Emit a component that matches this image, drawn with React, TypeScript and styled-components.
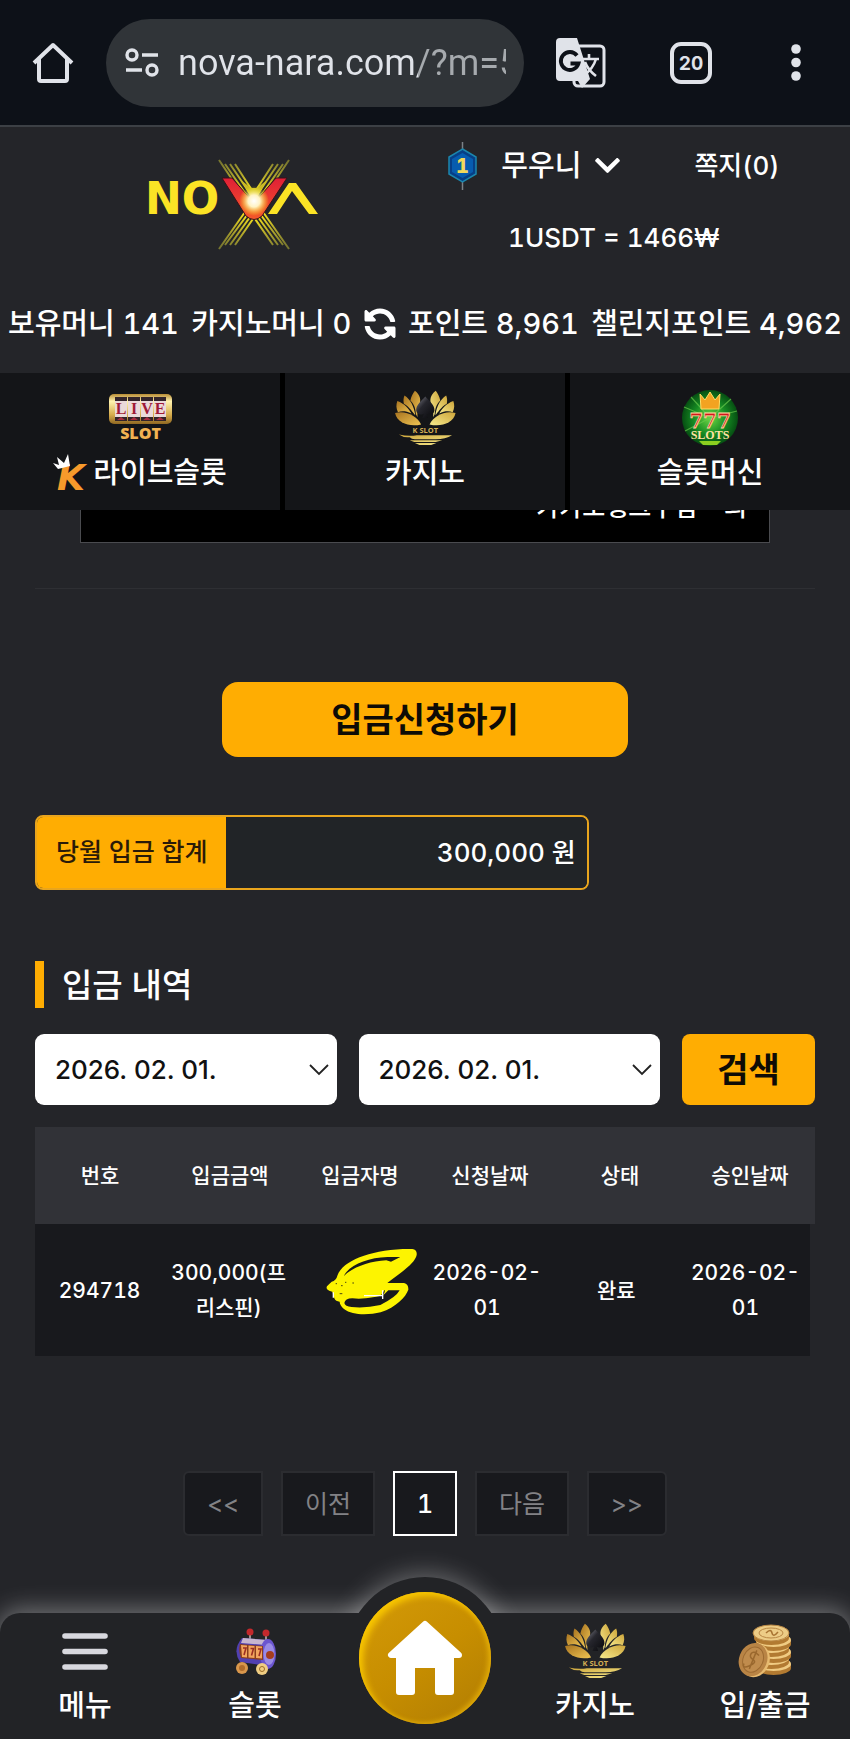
import React, { useId } from "react";
import styled, { createGlobalStyle, css } from "styled-components";
import { FaSyncAlt, FaChevronDown } from "react-icons/fa";

const amber = "#ffad02";
const panel = "#18191d";
const surface = "#242529";
const navSurface = "#222326";

const GlobalStyle = createGlobalStyle`
  *, *::before, *::after { box-sizing: border-box; }
  body {
    margin: 0;
    background: ${surface};
    color: #fff;
    font-family: Inter, "Noto Sans CJK KR", sans-serif;
    font-weight: 500;
    font-variant-numeric: tabular-nums;
  }
  button, input, select { font: inherit; color: inherit; margin: 0; }
  button { cursor: pointer; }
  a { color: inherit; text-decoration: none; }
  svg { display: block; flex: none; }
`;

const Page = styled.div`
  display: flex;
  flex-direction: column;
  min-height: 100vh;
`;

/* Browser bar */

const BrowserBar = styled.div`
  display: flex;
  align-items: center;
  height: 127px;
  padding: 0 34px 0 32px;
  background: #0d1118;
  border-bottom: 2px solid #3c4045;
  color: #e0e3e9;
`;

const BarButton = styled.button`
  display: grid;
  place-items: center;
  flex: none;
  min-width: 40px;
  padding: 0;
  border: 0;
  background: none;
`;

const AddressBar = styled.label`
  display: flex;
  align-items: center;
  gap: 18px;
  flex: 1;
  min-width: 0;
  height: 88px;
  margin: 0 32px;
  padding: 0 18px;
  border-radius: 44px;
  background: #303438;
`;

const AddressInput = styled.input`
  flex: 1;
  min-width: 0;
  padding: 0;
  border: 0;
  outline: 0;
  background: linear-gradient(to right, #e0e3e9 240px, #a6aaae 240px);
  background-clip: text;
  color: transparent;
  font-family: Roboto, sans-serif;
  font-weight: 400;
  font-size: 36px;
  line-height: 44px;
`;

const BarActions = styled.div`
  display: flex;
  align-items: center;
  gap: 64px;
`;

/* Site header */

const Header = styled.header`
  display: grid;
  grid-template-columns: 4fr 5fr;
  align-items: center;
  height: 153px;
`;

const LogoLink = styled.a`
  justify-self: end;
  margin-right: 60px;
`;

const Account = styled.div`
  display: flex;
  flex-direction: column;
  align-items: center;
  gap: 36px;
  padding-bottom: 4px;
`;

const AccountRow = styled.div`
  display: flex;
  align-items: center;
  gap: 24px;
  height: 36px;
`;

const UserButton = styled.button`
  display: flex;
  align-items: center;
  gap: 12px;
  padding: 0;
  border: 0;
  background: none;
  font-size: 29px;
  line-height: 36px;
`;

const MessageLink = styled.a`
  margin-left: 48px;
  font-size: 26px;
  line-height: 36px;
`;

const Rate = styled.p`
  margin: 0;
  font-size: 26px;
  line-height: 36px;
`;

const Balances = styled.div`
  display: flex;
  align-items: center;
  justify-content: space-between;
  height: 93px;
  padding: 0 8px 6px;
  font-size: 29px;
  line-height: 40px;
  white-space: nowrap;
`;

const RefreshButton = styled(BarButton)`
  min-width: 32px;
  color: #fff;
  svg { transform: scaleX(-1); }
`;

const GameTabs = styled.nav`
  display: grid;
  grid-template-columns: repeat(3, 1fr);
  gap: 5px;
  background: #000;
`;

const GameTab = styled.a`
  display: flex;
  flex-direction: column;
  align-items: center;
  height: 137px;
  padding-top: 14px;
  background: #141518;
`;

const TabIcon = styled.span`
  display: grid;
  place-items: center;
  height: 62px;
`;

const TabLabel = styled.span`
  display: flex;
  align-items: center;
  gap: 4px;
  font-size: 29px;
  line-height: 48px;
`;

/* Content */

const Main = styled.main`
  display: flex;
  flex-direction: column;
  flex: 1;
  padding: 0 35px;
`;

const Notice = styled.div`
  display: flex;
  flex-direction: column;
  justify-content: flex-end;
  height: 33px;
  margin: 0 45px;
  padding: 0 22px 19px;
  border: 1px solid #4a4b4f;
  border-top: 0;
  background: #000;
  overflow: hidden;
  font-size: 25px;
  line-height: 32px;
  text-align: right;
  white-space: pre;
`;

const Divider = styled.hr`
  width: 100%;
  margin: 45px 0 93px;
  border: 0;
  border-top: 1px solid #2e2f33;
`;

const AmberButton = styled.button`
  border: 0;
  background: ${amber};
  color: #0e0b06;
  font-size: 34px;
  font-weight: 700;
  line-height: 40px;
`;

const ApplyButton = styled(AmberButton)`
  align-self: center;
  width: 52%;
  height: 75px;
  border-radius: 16px;
`;

const Total = styled.dl`
  display: flex;
  width: 71%;
  height: 75px;
  margin: 58px 0 0;
  border: 2px solid #e9a51d;
  border-radius: 8px;
  overflow: hidden;
  line-height: 71px;
`;

const TotalLabel = styled.dt`
  padding: 0 19px;
  background: ${amber};
  color: #2a1a08;
  font-size: 25px;
`;

const TotalValue = styled.dd`
  flex: 1;
  margin: 0;
  padding: 0 11px;
  background: #212427;
  font-size: 26px;
  text-align: right;
`;

const SectionTitle = styled.h2`
  margin: 71px 0 26px;
  padding: 2px 0 0 18px;
  border-left: 9px solid ${amber};
  font-size: 33px;
  font-weight: 500;
  line-height: 45px;
`;

const SearchForm = styled.form`
  display: grid;
  grid-template-columns: 1fr 1fr 133px;
  gap: 22px;
  height: 71px;
`;

const SearchButton = styled(AmberButton)`
  border-radius: 8px;
`;

const SelectBox = styled.div`
  position: relative;
  display: grid;
  svg {
    position: absolute;
    right: 8px;
    top: 30px;
    pointer-events: none;
  }
`;

const Select = styled.select`
  appearance: none;
  width: 100%;
  padding: 0 20px;
  border: 0;
  border-radius: 9px;
  background: #fff;
  color: #111;
  font-size: 26px;
  font-variant-numeric: normal;
`;

const History = styled.table`
  display: block;
  margin-top: 22px;
  font-size: 21px;
  line-height: 35px;
  text-align: center;
`;

const HistoryHead = styled.thead`
  display: table;
  table-layout: fixed;
  width: 100%;
  border-collapse: collapse;
  background: #313237;
`;

const HistoryBody = styled.tbody`
  display: table;
  table-layout: fixed;
  width: calc(100% - 5px);
  border-collapse: collapse;
  background: ${panel};
`;

const HeadCell = styled.th`
  height: 97px;
  padding: 0;
  font-weight: 500;
`;

const Cell = styled.td`
  height: 132px;
  padding: 0 4px;
`;

const Pagination = styled.nav`
  display: flex;
  justify-content: center;
  gap: 18px;
  margin: 115px 0 76px;
`;

const PageButton = styled.button<{ $current?: boolean; $end?: "left" | "right" }>`
  min-width: 64px;
  height: 65px;
  padding: 0 22px;
  border: 2px solid #2b2c30;
  background: ${panel};
  color: #828286;
  font-size: 25px;
  font-weight: 400;
  line-height: 32px;
  ${(p) => p.$end && css`
    width: 80px;
    padding: 0;
    border-radius: ${p.$end === "left" ? "6px 0 0 6px" : "0 6px 6px 0"};
  `}
  ${(p) => p.$current && css`
    border-color: #fff;
    color: #fff;
    font-weight: 500;
  `}
`;

/* Bottom navigation */

const BottomNav = styled.nav`
  position: relative;
  display: grid;
  grid-template-columns: repeat(5, 1fr);
  height: 126px;
  border-radius: 20px 20px 0 0;
  background: ${navSurface};
  box-shadow: 0 -2px 24px 2px rgba(255, 255, 255, 0.36);
`;

const BottomLink = styled.a`
  display: flex;
  flex-direction: column;
  align-items: center;
  padding-top: 8px;
  font-size: 29px;
  line-height: 50px;
  z-index: 1;
`;

const BottomIcon = styled.span`
  display: grid;
  place-items: center;
  height: 60px;
`;

const HomeSlot = styled.div`
  position: relative;
`;

const HomeBump = styled.div`
  position: absolute;
  left: 50%;
  bottom: 4px;
  width: 158px;
  height: 158px;
  margin-left: -79px;
  border-radius: 50%;
  background: ${navSurface};
  box-shadow: 0 -2px 24px 2px rgba(255, 255, 255, 0.3);
  clip-path: inset(-40px -40px 122px -40px);
`;

const HomeLink = styled.a`
  position: absolute;
  left: 50%;
  bottom: 15px;
  display: grid;
  place-items: center;
  width: 132px;
  height: 132px;
  margin-left: -66px;
  border-radius: 50%;
  background: linear-gradient(145deg, #d49a08, #c78e00 50%, #b07d04);
  box-shadow: inset 4px 4px 6px #f8c600, inset -3px -1px 5px #e0aa08;
`;

const Loose = styled.svg`
  overflow: visible;
`;

/* Drawings */

const HomeOutline = () => (
  <svg width="42" height="42" viewBox="0 0 42 42" fill="none" stroke="currentColor" strokeWidth="4" strokeLinejoin="round">
    <path d="M2 21 21 3l19 18M7 17v20q0 2 2 2h24q2 0 2-2V17" />
  </svg>
);

const SiteInfo = () => (
  <svg width="36" height="30" viewBox="0 0 36 30" fill="none" stroke="currentColor" strokeWidth="3.4">
    <circle cx="8" cy="7" r="5" />
    <path d="M18 7h16M2 22h16" />
    <circle cx="28" cy="22" r="5" />
  </svg>
);

const Translate = () => (
  <svg width="50" height="50" viewBox="0 0 50 50">
    <rect x="18" y="8" width="30" height="40" rx="4" fill="none" stroke="#e0e3e9" strokeWidth="3" />
    <path d="M4 0h17l13 41-8 9-4-7H4q-4 0-4-4V4q0-4 4-4z" fill="#e0e3e9" />
    <path d="M21 17.500a9 9 0 1 0 1.500 8h-8" fill="none" stroke="#0d1118" strokeWidth="3.800" />
    <path d="M26 21h17M33 16v5M40 21q-3 10-12 16M29 24q3 8 11 14" fill="none" stroke="#e0e3e9" strokeWidth="2.600" />
  </svg>
);

const TabCount = () => (
  <svg width="42" height="42" viewBox="0 0 42 42">
    <rect x="2" y="2" width="38" height="38" rx="9" fill="none" stroke="#e0e3e9" strokeWidth="4" />
    <text x="21" y="28" textAnchor="middle" fontSize="19" fontWeight="700" fill="#e0e3e9">20</text>
  </svg>
);

const MoreDots = () => (
  <svg width="10" height="38" viewBox="0 0 10 38" fill="currentColor">
    <circle cx="5" cy="5" r="4.800" /><circle cx="5" cy="18.500" r="4.800" /><circle cx="5" cy="32" r="4.800" />
  </svg>
);

const NovaLogo = () => {
  const id = useId();
  return (
    <Loose width="170" height="92" viewBox="0 0 170 92" role="img" aria-label="NOVA">
      <defs>
        <linearGradient id={id + "r"} x1="0" y1="0" x2="0" y2="1">
          <stop offset="0" stopColor="#e01f36" /><stop offset="1" stopColor="#f4582a" />
        </linearGradient>
        <radialGradient id={id + "g"}>
          <stop offset="0" stopColor="#fff" /><stop offset=".4" stopColor="#fff3c4" />
          <stop offset="1" stopColor="#fff200" stopOpacity="0" />
        </radialGradient>
        <radialGradient id={id + "y"} gradientUnits="userSpaceOnUse" cx="106" cy="46" r="54">
          <stop offset=".2" stopColor="#fbe51b" /><stop offset=".6" stopColor="#b0a62b" /><stop offset="1" stopColor="#77762f" />
        </radialGradient>
      </defs>
      <g stroke={`url(#${id}y)`} strokeWidth="2" fill="none">
        <path d="M71 2 106 54M77 6 108 51M82 6 109 46M87 6 109 40M141 2 106 54M135 6 104 51M130 6 103 46M125 6 103 40" />
        <path d="M71 91 104 44M77 87 105 49M82 87 107 52M87 87 109 55M141 91 108 44M135 87 107 49M130 87 105 52M125 87 103 55" />
      </g>
      <text x="-3" y="56" fontFamily="DejaVu Sans" fontSize="44" fontWeight="700" fill="#fbe325">NO</text>
      <path d="M120 56 141 25H148L170 56H161L144 33 129 56z" fill="#fbe325" />
      <path d="M74 20h10l22 25 22-25h11l-25 38q-8 7-16 0z" fill={`url(#${id}r)`} stroke="#3a1118" strokeWidth="1" />
      <path d="M93 22 106 44 119 22 109 30H103z" fill="#c9b925" />
      <circle cx="106" cy="43" r="15" fill={`url(#${id}g)`} />
    </Loose>
  );
};

const LevelBadge = () => (
  <svg width="29" height="48" viewBox="0 0 29 48" aria-label="1">
    <path d="M14.500 0v48" stroke="#7b8288" strokeWidth="1.500" />
    <path d="M14.500 7 28 15v17l-13.500 8L1 32V15z" fill="#073f86" stroke="#1b86ad" strokeWidth="1.500" />
    <path d="M14.500 11 25 17v13l-10.500 6L4 30V17z" fill="#075caf" />
    <text x="14.500" y="31" textAnchor="middle" fontSize="20" fontWeight="800" fill="#f3d95b">1</text>
  </svg>
);

const LiveSlot = () => {
  const id = useId();
  return (
    <Loose width="63" height="50" viewBox="0 0 63 50">
      <defs>
        <linearGradient id={id} x1="0" y1="0" x2="0" y2="1">
          <stop offset="0" stopColor="#b98d35" /><stop offset=".25" stopColor="#fff2ae" />
          <stop offset=".7" stopColor="#d5ab4b" /><stop offset="1" stopColor="#8f6722" />
        </linearGradient>
      </defs>
      <rect x="0" y="1" width="63" height="30" rx="5" fill={`url(#${id})`} />
      {["L", "I", "V", "E"].map((c, i) => (
        <g key={c}>
          <rect x={6 + i * 13} y="4" width="12" height="24" fill="#33242a" />
          <rect x={6 + i * 13} y="8" width="12" height="16" fill="#ead9d9" />
          <path d={`M${8 + i * 13} 27l4-3 4 3z`} fill="#a92c3f" />
          <text x={12 + i * 13} y="21" textAnchor="middle" fontFamily="Liberation Serif" fontSize="16" fontWeight="700" fill="#a01a35">{c}</text>
        </g>
      ))}
      <text x="31.500" y="46" textAnchor="middle" fontFamily="Open Sans" fontSize="16" fontWeight="800" fill="#f1b252">SLOT</text>
    </Loose>
  );
};

const KCrown = () => (
  <Loose width="36" height="40" viewBox="0 0 36 40">
    <text x="4" y="37" fontFamily="DejaVu Sans" fontSize="36" fontStyle="italic" fontWeight="700" fill="#f79a2b">K</text>
    <path d="M5 16 0 10l6 2-2-8 7 6 4-9 2 12z" fill="#fff" />
  </Loose>
);

const Lotus = () => {
  const id = useId();
  const petals = (
    <>
      <path d="M43 97C75 88 110 105 123 132 90 140 50 130 43 97z" />
      <path d="M50 60C72 68 86 84 93 98 78 90 62 90 52 94 46 82 46 72 50 60z" />
      <path d="M72 43C90 55 101 75 105 103 98 96 88 78 70 68 68 58 69 50 72 43z" />
      <path d="M104 28C120 40 124 56 117 72 111 84 111 95 112 110L107 100C106 80 100 68 90 58 93 44 98 36 104 28z" />
    </>
  );
  return (
    <svg width="62" height="56" viewBox="40 26 190 172">
      <defs>
        <linearGradient id={id + "l"} x1="0" y1="0" x2="1" y2="1">
          <stop offset="0" stopColor="#a87420" /><stop offset="1" stopColor="#f0c553" />
        </linearGradient>
        <linearGradient id={id + "r"} x1="0" y1="0" x2="1" y2="1">
          <stop offset="0" stopColor="#cda53a" /><stop offset="1" stopColor="#f7ea8d" />
        </linearGradient>
        <linearGradient id={id + "s"} x1="0" y1="0" x2="1" y2="1">
          <stop offset="0" stopColor="#85858f" /><stop offset=".4" stopColor="#26262d" /><stop offset="1" stopColor="#08080b" />
        </linearGradient>
      </defs>
      <g fill={`url(#${id}l)`}>{petals}</g>
      <g fill={`url(#${id}r)`} transform="translate(272 0) scale(-1 1)">{petals}</g>
      <path d="M136 46C148 60 166 72 164 90 161 104 146 103 140 98L145 112H127L132 98C126 103 111 104 108 90 106 72 124 60 136 46z" fill={`url(#${id}s)`} />
      <text x="136" y="159" textAnchor="middle" fontFamily="Open Sans" fontSize="23" fontWeight="700" fill="#d2ae54">K SLOT</text>
      <path d="M55 163q30 6 55 2h108q-20 12-50 12H104q-10 0-16-6-20 2-33-8zM88 180h100l-20 6h-66zM104 189h66l-16 6h-36z" fill={`url(#${id}r)`} />
    </svg>
  );
};

const Sevens = () => {
  const id = useId();
  return (
    <svg width="58" height="58" viewBox="0 0 58 58">
      <defs>
        <radialGradient id={id}>
          <stop offset="0" stopColor="#6ed845" /><stop offset=".6" stopColor="#158a22" /><stop offset="1" stopColor="#064e12" />
        </radialGradient>
      </defs>
      <circle cx="29" cy="29" r="28" fill={`url(#${id})`} />
      <path d="M29 29 3 18M29 29 10 8M29 29 50 10M29 29 56 22M29 29 4 42" stroke="#69c84c" strokeWidth="1.200" opacity=".7" />
      <path d="M19 5l5 6 5-8 5 8 5-6-1 15H20z" fill="#f3a321" stroke="#ffdd67" strokeWidth="1" />
      <text x="29" y="39" textAnchor="middle" fontFamily="DejaVu Serif" fontSize="20" fontWeight="700" fill="#d3181c" stroke="#ffd9a1" strokeWidth=".8">777</text>
      <text x="29" y="50" textAnchor="middle" fontFamily="Liberation Serif" fontSize="12" fontWeight="700" fill="#ffe2a2">SLOTS</text>
      <path d="M18 52h22l-4 4H22z" fill="#8ccf20" />
    </svg>
  );
};

const Scribble = () => (
  <Loose width="120" height="80" viewBox="-36 63 360 240">
    <path
      fill="#fdf400"
      fillRule="evenodd"
      d="M85 140C100 95 190 58 310 60Q325 62 323 78C318 104 270 135 235 162H285Q299 165 298 182C290 204 262 234 215 250 180 258 130 260 105 240Q92 228 92 218 80 218 76 208L70 188Q48 182 54 172 60 165 68 158 82 154 85 140z
         M104 142C125 118 180 96 232 94L246 98 274 84H235C175 86 120 108 104 142z
         M108 222C120 228 170 232 200 222 215 212 225 200 228 184H226L215 200C180 210 130 206 108 222z"
    />
    <path d="M106 222Q108 208 130 208 180 212 215 206L238 184H272Q262 204 214 228 170 238 128 234 108 232 106 222z" fill={panel} />
    <path d="M165 200h54M221 184v26M73 190v16" stroke="#fff" strokeWidth="4" fill="none" />
    <path d="M80 164h4M96 170h5M108 160h4M130 162h5M92 194h8" stroke="#4c4a10" strokeWidth="3" />
  </Loose>
);

const ThinChevron = () => (
  <svg width="20" height="12" viewBox="0 0 20 12" fill="none" stroke="#222" strokeWidth="1.800">
    <path d="M1 1l9 9 9-9" />
  </svg>
);

const MenuIcon = () => (
  <svg width="46" height="37" viewBox="0 0 46 37" stroke="#d8d8de" strokeWidth="5.600" strokeLinecap="round">
    <path d="M3 3h40M3 18.500h40M3 34h40" />
  </svg>
);

const SlotCart = () => (
  <svg width="42" height="47" viewBox="0 0 42 47">
    <path d="M16 5v8M32 6v8" stroke="#c7b5b2" strokeWidth="1.500" />
    <circle cx="16" cy="4" r="3.500" fill="#c4282c" /><circle cx="32" cy="5" r="3.500" fill="#c4282c" />
    <path d="M8 10 34 12 34 38 6 34Q-2 22 8 10z" fill="#5140b0" />
    <path d="M9 10l25 2-2 5L7 15z" fill="#c6b6cf" />
    <ellipse cx="34" cy="26" rx="8" ry="15" fill="#6b55cf" />
    <ellipse cx="35" cy="26" rx="5.500" ry="11" fill="#9a8be4" />
    <path d="M6 16 29 18v14L7 30Q4 22 6 16z" fill="#8b3e1c" />
    <path d="M7 17l6 .500v12L8 29zM14.500 17.500l6 .500v12l-6-.500zM22 18l6 .500v12l-6-.500z" fill="#f2a55e" />
    <path d="M9 20h3l-2 7M16.500 20.500h3l-2 7M24 21h3l-2 7" stroke="#9c2f22" strokeWidth="1.600" fill="none" />
    <circle cx="36" cy="27" r="4" fill="#a53d1e" />
    <circle cx="8" cy="40" r="6" fill="#d9974c" /><circle cx="8" cy="40" r="3" fill="#b06c2a" />
    <circle cx="28" cy="41" r="6" fill="#f0cd82" /><circle cx="28" cy="41" r="2.500" fill="none" stroke="#9c6c28" />
  </svg>
);

const Coins = () => (
  <svg width="54" height="54" viewBox="0 0 54 54">
    {[51, 45, 39, 33, 27, 21].map((y, i) => (
      <g key={y}>
        <path d={`M${i % 2 ? 16 : 18} ${y - 11}v4a17.500 7 0 0 0 35 0v-4z`} fill="#b27a31" />
        <ellipse cx={i % 2 ? 33.500 : 35.500} cy={y - 11} rx="17.500" ry="7" fill="#f0cb82" />
      </g>
    ))}
    <ellipse cx="33" cy="9" rx="18" ry="8" fill="#edcc86" stroke="#b98744" />
    <ellipse cx="33" cy="9" rx="12" ry="5" fill="none" stroke="#b98744" />
    <path d="M28 9q5-5 6 0t6-1" fill="none" stroke="#a87332" strokeWidth="1.500" />
    <g transform="rotate(22 16 36)">
      <ellipse cx="17.500" cy="36" rx="14" ry="17" fill="#e7ba70" />
      <ellipse cx="15" cy="36" rx="14" ry="17" fill="#b98445" />
      <ellipse cx="15" cy="36" rx="10" ry="13" fill="#c08c4d" stroke="#9d6b32" />
      <path d="M19 30q-7-3-8 1t4 5-1 7-6 0M15 26v20" fill="none" stroke="#9a682e" strokeWidth="1.500" />
    </g>
  </svg>
);

const HouseSolid = () => (
  <svg width="76" height="76" viewBox="0 0 76 76" fill="#fff" stroke="#fff" strokeWidth="6" strokeLinejoin="round">
    <path d="M38 4 4 35h8v37h13V45h26v27h13V35h8z" />
  </svg>
);

/* Data */

const tabs = [
  { label: "라이브슬롯", icon: <LiveSlot />, mark: <KCrown /> },
  { label: "카지노", icon: <Lotus /> },
  { label: "슬롯머신", icon: <Sevens /> },
];

const columns = ["번호", "입금금액", "입금자명", "신청날짜", "상태", "승인날짜"];

const DateSelect = ({ label }: { label: string }) => (
  <SelectBox>
    <Select aria-label={label} defaultValue="2026. 02. 01.">
      <option>2026. 02. 01.</option>
    </Select>
    <ThinChevron />
  </SelectBox>
);

const BottomItem = ({ label, children }: { label: string; children: React.ReactNode }) => (
  <BottomLink href="#">
    <BottomIcon>{children}</BottomIcon>
    {label}
  </BottomLink>
);

export default function App() {
  return (
    <Page>
      <GlobalStyle />
      <BrowserBar>
        <BarButton aria-label="홈"><HomeOutline /></BarButton>
        <AddressBar>
          <SiteInfo />
          <AddressInput aria-label="주소" readOnly value="nova-nara.com/?m=5" />
        </AddressBar>
        <BarActions>
          <BarButton aria-label="번역"><Translate /></BarButton>
          <BarButton aria-label="탭"><TabCount /></BarButton>
          <BarButton aria-label="더보기"><MoreDots /></BarButton>
        </BarActions>
      </BrowserBar>

      <Header>
        <LogoLink href="#"><NovaLogo /></LogoLink>
        <Account>
          <AccountRow>
            <LevelBadge />
            <UserButton>무우니 <FaChevronDown size={29} /></UserButton>
            <MessageLink href="#">쪽지(0)</MessageLink>
          </AccountRow>
          <Rate>1USDT = 1466₩</Rate>
        </Account>
      </Header>

      <Balances>
        <span>보유머니 141</span>
        <span>카지노머니 0</span>
        <RefreshButton aria-label="새로고침"><FaSyncAlt size={32} /></RefreshButton>
        <span>포인트 8,961</span>
        <span>챌린지포인트 4,962</span>
      </Balances>

      <GameTabs>
        {tabs.map((t) => (
          <GameTab href="#" key={t.label}>
            <TabIcon>{t.icon}</TabIcon>
            <TabLabel>{t.mark}{t.label}</TabLabel>
          </GameTab>
        ))}
      </GameTabs>

      <Main>
        <Notice>카카오뱅크구임    의</Notice>
        <Divider />
        <ApplyButton>입금신청하기</ApplyButton>
        <Total>
          <TotalLabel>당월 입금 합계</TotalLabel>
          <TotalValue>300,000 원</TotalValue>
        </Total>

        <SectionTitle>입금 내역</SectionTitle>
        <SearchForm onSubmit={(e) => e.preventDefault()}>
          <DateSelect label="시작일" />
          <DateSelect label="종료일" />
          <SearchButton>검색</SearchButton>
        </SearchForm>

        <History>
          <HistoryHead>
            <tr>{columns.map((c) => <HeadCell key={c} scope="col">{c}</HeadCell>)}</tr>
          </HistoryHead>
          <HistoryBody>
            <tr>
              <Cell>294718</Cell>
              <Cell>300,000(프<br />리스핀)</Cell>
              <Cell><Scribble /></Cell>
              <Cell>2026-02-<br />01</Cell>
              <Cell>완료</Cell>
              <Cell>2026-02-<br />01</Cell>
            </tr>
          </HistoryBody>
        </History>

        <Pagination aria-label="페이지">
          <PageButton $end="left">&lt;&lt;</PageButton>
          <PageButton>이전</PageButton>
          <PageButton $current>1</PageButton>
          <PageButton>다음</PageButton>
          <PageButton $end="right">&gt;&gt;</PageButton>
        </Pagination>
      </Main>

      <BottomNav>
        <BottomItem label="메뉴"><MenuIcon /></BottomItem>
        <BottomItem label="슬롯"><SlotCart /></BottomItem>
        <HomeSlot>
          <HomeBump />
          <HomeLink href="#" aria-label="홈"><HouseSolid /></HomeLink>
        </HomeSlot>
        <BottomItem label="카지노"><Lotus /></BottomItem>
        <BottomItem label="입/출금"><Coins /></BottomItem>
      </BottomNav>
    </Page>
  );
}
